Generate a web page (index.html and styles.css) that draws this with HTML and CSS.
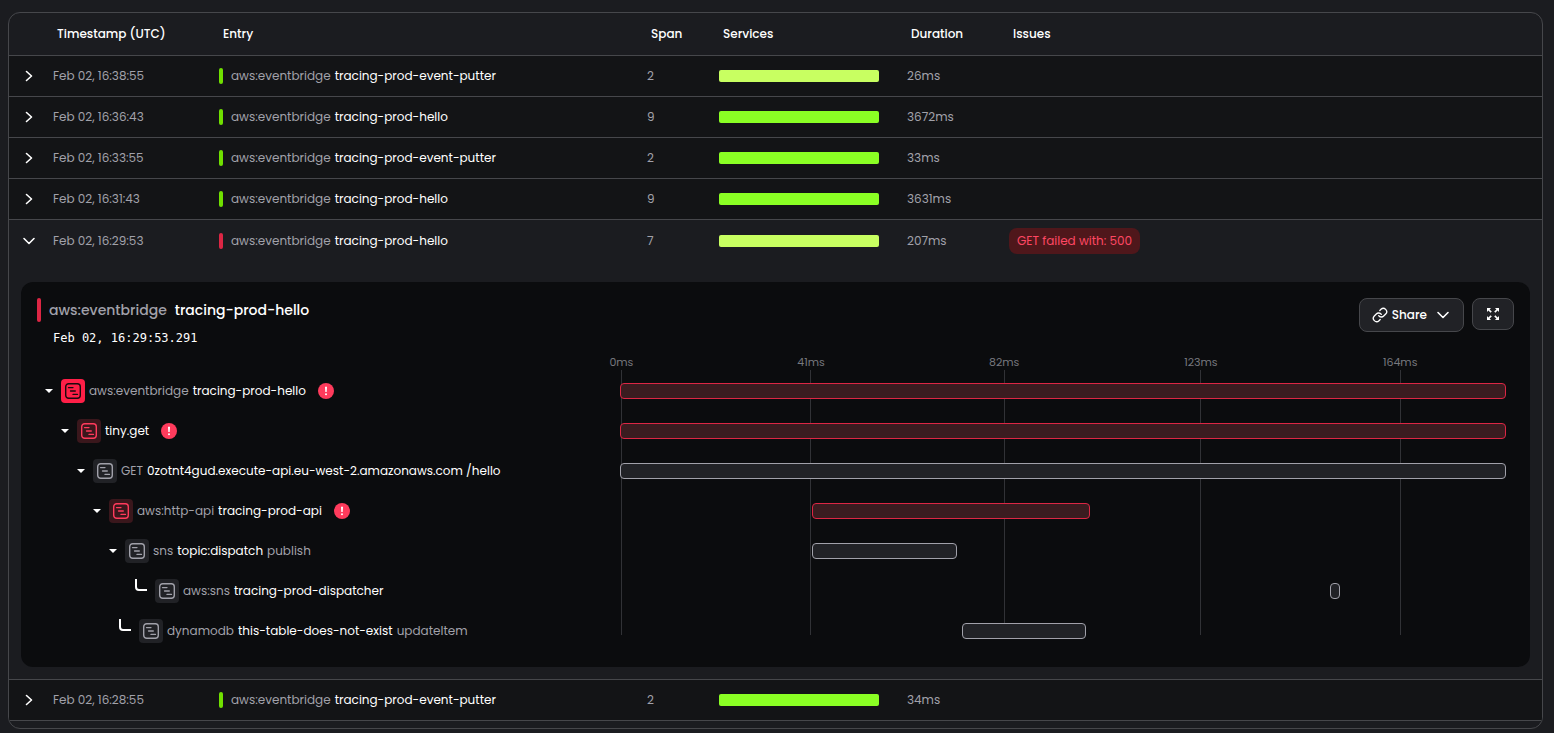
FILE: index.html
```html
<!DOCTYPE html>
<html lang="en">
<head>
<meta charset="utf-8">
<title>Traces</title>
<link rel="stylesheet" href="styles.css">
</head>
<body>
<svg class="defs" aria-hidden="true">
  <symbol id="right" viewBox="0 0 16 16"><path d="M5.5 3.500L10.500 8L5.500 12.500" fill="none" stroke="currentColor" stroke-width="1.600" stroke-linecap="round" stroke-linejoin="round"/></symbol>
  <symbol id="down" viewBox="0 0 16 16"><path d="M3 5.500L8 10.500L13 5.500" fill="none" stroke="currentColor" stroke-width="1.600" stroke-linecap="round" stroke-linejoin="round"/></symbol>
  <symbol id="caret" viewBox="0 0 8 8"><path d="M0 2H8L4 6Z" fill="currentColor"/></symbol>
  <symbol id="elbow" viewBox="0 0 12 12"><path d="M1 0V8Q1 11 4 11H12" fill="none" stroke="currentColor" stroke-width="2"/></symbol>
  <symbol id="span" viewBox="0 0 16 16"><rect x=".7" y=".7" width="14.600" height="14.600" rx="3" fill="none" stroke="currentColor" stroke-width="1.400"/><path d="M3.500 4.600H8M5.500 8H10.300M8 11.400H12.500" fill="none" stroke="currentColor" stroke-width="1.300" stroke-linecap="round"/></symbol>
  <symbol id="alert" viewBox="0 0 16 16"><circle cx="8" cy="8" r="8" fill="#ff3b5c"/><path d="M7 3.700H9L8.700 9H7.300Z" fill="#fff"/><circle cx="8" cy="11.200" r="1" fill="#fff"/></symbol>
  <symbol id="link" viewBox="0 0 24 24"><path d="M10 13a5 5 0 0 0 7.540.540l3-3a5 5 0 0 0-7.070-7.070l-1.720 1.710M14 11a5 5 0 0 0-7.540-.540l-3 3a5 5 0 0 0 7.070 7.070l1.710-1.710" fill="none" stroke="currentColor" stroke-width="2" stroke-linecap="round" stroke-linejoin="round"/></symbol>
  <symbol id="expand" viewBox="0 0 12 12"><path d="M0 0H4L2.600 1.400L4.800 3.600L3.600 4.800L1.400 2.600L0 4ZM12 0V4L10.600 2.600L8.400 4.800L7.200 3.600L9.400 1.400L8 0ZM0 12V8L1.400 9.400L3.600 7.200L4.800 8.400L2.600 10.600L4 12ZM12 12H8L9.400 10.600L7.200 8.400L8.400 7.200L10.600 9.400L12 8Z" fill="currentColor"/></symbol>
</svg>
<main class="traces">
  <table class="trace-table">
    <colgroup><col class="c-toggle"><col class="c-time"><col class="c-entry"><col class="c-span"><col class="c-services"><col class="c-duration"><col></colgroup>
    <thead>
      <tr><th></th><th>Timestamp (UTC)</th><th>Entry</th><th>Span</th><th>Services</th><th>Duration</th><th>Issues</th></tr>
    </thead>
    <tbody>
      <tr class="trace">
        <td><button class="toggle" aria-label="Expand trace"><svg><use href="#right"/></svg></button></td>
        <td>Feb 02, 16:38:55</td>
        <td><div class="entry"><i class="mark"></i><span class="name">aws:eventbridge <b>tracing-prod-event-putter</b></span></div></td>
        <td>2</td><td><div class="service light"></div></td><td>26ms</td><td></td>
      </tr>
      <tr class="trace">
        <td><button class="toggle" aria-label="Expand trace"><svg><use href="#right"/></svg></button></td>
        <td>Feb 02, 16:36:43</td>
        <td><div class="entry"><i class="mark"></i><span class="name">aws:eventbridge <b>tracing-prod-hello</b></span></div></td>
        <td>9</td><td><div class="service"></div></td><td>3672ms</td><td></td>
      </tr>
      <tr class="trace">
        <td><button class="toggle" aria-label="Expand trace"><svg><use href="#right"/></svg></button></td>
        <td>Feb 02, 16:33:55</td>
        <td><div class="entry"><i class="mark"></i><span class="name">aws:eventbridge <b>tracing-prod-event-putter</b></span></div></td>
        <td>2</td><td><div class="service"></div></td><td>33ms</td><td></td>
      </tr>
      <tr class="trace">
        <td><button class="toggle" aria-label="Expand trace"><svg><use href="#right"/></svg></button></td>
        <td>Feb 02, 16:31:43</td>
        <td><div class="entry"><i class="mark"></i><span class="name">aws:eventbridge <b>tracing-prod-hello</b></span></div></td>
        <td>9</td><td><div class="service"></div></td><td>3631ms</td><td></td>
      </tr>
      <tr class="trace open">
        <td><button class="toggle" aria-label="Collapse trace" aria-expanded="true"><svg><use href="#down"/></svg></button></td>
        <td>Feb 02, 16:29:53</td>
        <td><div class="entry"><i class="mark error"></i><span class="name">aws:eventbridge <b>tracing-prod-hello</b></span></div></td>
        <td>7</td><td><div class="service light"></div></td><td>207ms</td><td><span class="issue">GET failed with: 500</span></td>
      </tr>
      <tr class="detail">
        <td colspan="7">
          <section class="panel">
            <header class="panel-head">
              <div>
                <h2 class="title"><i class="mark error"></i><span>aws:eventbridge</span><b>tracing-prod-hello</b></h2>
                <time class="stamp">Feb 02, 16:29:53.291</time>
              </div>
              <div class="actions">
                <button class="btn share"><svg class="link"><use href="#link"/></svg>Share<svg class="chev"><use href="#down"/></svg></button>
                <button class="btn full" aria-label="Full screen"><svg><use href="#expand"/></svg></button>
              </div>
            </header>
            <div class="waterfall">
              <div class="axis">
                <div class="tick" style="left:0.1%"><span>0ms</span></div>
                <div class="tick" style="left:21.5%"><span>41ms</span></div>
                <div class="tick" style="left:43.3%"><span>82ms</span></div>
                <div class="tick" style="left:65.5%"><span>123ms</span></div>
                <div class="tick" style="left:88%"><span>164ms</span></div>
              </div>
              <div class="node d0"><svg class="caret"><use href="#caret"/></svg><i class="icon solid"><svg><use href="#span"/></svg></i><span class="name">aws:eventbridge <b>tracing-prod-hello</b></span><svg class="alert"><use href="#alert"/></svg></div>
              <div class="track"><div class="bar error" style="width:100%"></div></div>
              <div class="node d1"><svg class="caret"><use href="#caret"/></svg><i class="icon error"><svg><use href="#span"/></svg></i><span class="name"><b>tiny.get</b></span><svg class="alert"><use href="#alert"/></svg></div>
              <div class="track"><div class="bar error" style="width:100%"></div></div>
              <div class="node d2"><svg class="caret"><use href="#caret"/></svg><i class="icon"><svg><use href="#span"/></svg></i><span class="name">GET <b>0zotnt4gud.execute-api.eu-west-2.amazonaws.com /hello</b></span></div>
              <div class="track"><div class="bar" style="width:100%"></div></div>
              <div class="node d3"><svg class="caret"><use href="#caret"/></svg><i class="icon error"><svg><use href="#span"/></svg></i><span class="name">aws:http-api <b>tracing-prod-api</b></span><svg class="alert"><use href="#alert"/></svg></div>
              <div class="track"><div class="bar error" style="margin-left:21.7%;width:31.4%"></div></div>
              <div class="node d4"><svg class="caret"><use href="#caret"/></svg><i class="icon"><svg><use href="#span"/></svg></i><span class="name">sns <b>topic:dispatch</b> publish</span></div>
              <div class="track"><div class="bar" style="margin-left:21.7%;width:16.3%"></div></div>
              <div class="node leaf l5"><svg class="elbow"><use href="#elbow"/></svg><i class="icon"><svg><use href="#span"/></svg></i><span class="name">aws:sns <b>tracing-prod-dispatcher</b></span></div>
              <div class="track"><div class="bar" style="margin-left:80.1%;width:1.2%"></div></div>
              <div class="node leaf l4"><svg class="elbow"><use href="#elbow"/></svg><i class="icon"><svg><use href="#span"/></svg></i><span class="name">dynamodb <b>this-table-does-not-exist</b> updateItem</span></div>
              <div class="track"><div class="bar" style="margin-left:38.6%;width:14%"></div></div>
            </div>
          </section>
        </td>
      </tr>
      <tr class="trace">
        <td><button class="toggle" aria-label="Expand trace"><svg><use href="#right"/></svg></button></td>
        <td>Feb 02, 16:28:55</td>
        <td><div class="entry"><i class="mark"></i><span class="name">aws:eventbridge <b>tracing-prod-event-putter</b></span></div></td>
        <td>2</td><td><div class="service"></div></td><td>34ms</td><td></td>
      </tr>
    </tbody>
  </table>
</main>
</body>
</html>
```
FILE: styles.css
```css
* { box-sizing: border-box; }
body {
  margin: 0;
  padding: 12px 11px 4px 8px;
  background: #1b1c20;
  color: #a1a1aa;
  font: 12px/20px Poppins, Inter, sans-serif;
}
svg { display: block; flex: none; }
.defs { display: none; }
b { font-weight: 400; color: #fff; }
i { display: block; flex: none; }
button { font: inherit; color: #fff; cursor: pointer; }

.traces {
  border: 1px solid #46474b;
  border-radius: 12px;
  padding-bottom: 7px;
  overflow: hidden;
}
.trace-table { width: 100%; table-layout: fixed; border-collapse: separate; border-spacing: 0; }
.c-toggle { width: 36px; }
.c-time { width: 166px; }
.c-entry { width: 428px; }
.c-span { width: 72px; }
.c-services { width: 188px; }
.c-duration { width: 102px; }
th {
  height: 43px;
  padding: 0 12px;
  border-bottom: 1px solid #46474b;
  text-align: left;
  font-weight: 500;
  color: #fff;
}
td { padding: 0 8px; }
.trace td { height: 41px; background: #131416; border-bottom: 1px solid #46474b; white-space: nowrap; }
.trace.open td { height: 42px; background: #1b1c20; border-bottom: 0; }
.toggle { display: block; margin: 0 auto; padding: 0; border: 0; background: none; }
.trace td:first-child { padding: 0 4px 0 8px; }
.toggle svg { width: 16px; height: 16px; }
.entry { display: flex; align-items: center; gap: 8px; }
.name { display: flex; gap: 4px; }
.mark { width: 4px; height: 16px; border-radius: 2px; background: #70e000; }
.mark.error { background: #dc2644; }
.service { width: 160px; height: 12px; border-radius: 2px; background: #8aff24; }
.service.light { background: #c8ff61; }
.issue {
  display: inline-block;
  padding: 3px 8px;
  border-radius: 8px;
  background: #4f171b;
  color: #ff4763;
}

.detail td { padding: 20px 12px 12px; border-bottom: 1px solid #46474b; }
.panel { padding: 16px; border-radius: 12px; background: #0b0c0e; }
.panel-head { display: flex; justify-content: space-between; align-items: flex-start; min-height: 56px; }
.title { display: flex; align-items: center; gap: 8px; margin: 0; font-size: 14px; line-height: 24px; font-weight: 500; }
.title b { font-weight: 500; }
.title .mark { height: 24px; }
.stamp { display: block; padding: 6px 16px 0; color: #fff; font: 12px/20px "DejaVu Sans Mono", monospace; }
.actions { display: flex; align-items: flex-start; gap: 8px; }
.btn {
  display: flex;
  align-items: center;
  justify-content: center;
  border: 1px solid #46474b;
  border-radius: 8px;
  background: #212226;
  font-weight: 500;
}
.share { height: 34px; padding: 0 12px; gap: 4px; }
.share .link { width: 16px; height: 16px; }
.share .chev { width: 16px; height: 16px; margin-left: 4px; }
.full { width: 42px; height: 32px; padding: 0; }
.full svg { width: 12px; height: 12px; }

.waterfall {
  display: grid;
  grid-template-columns: 583px 1fr;
  grid-template-rows: 17px;
  grid-auto-rows: 40px;
  padding-right: 8px;
}
.axis { position: relative; grid-column: 2; grid-row: 1 / span 8; margin-bottom: 16px; }
.tick { position: absolute; top: 16px; bottom: 0; width: 1px; background: #313236; }
.tick span {
  position: absolute;
  bottom: 100%;
  left: 50%;
  transform: translateX(-50%);
  font-size: 11px;
  line-height: 16px;
  color: #77787e;
}
.node { grid-column: 1; display: flex; align-items: center; white-space: nowrap; }
.node:nth-of-type(2), .node:nth-of-type(2) + .track { grid-row: 2; }
.node:nth-of-type(4), .node:nth-of-type(4) + .track { grid-row: 3; }
.node:nth-of-type(6), .node:nth-of-type(6) + .track { grid-row: 4; }
.node:nth-of-type(8), .node:nth-of-type(8) + .track { grid-row: 5; }
.node:nth-of-type(10), .node:nth-of-type(10) + .track { grid-row: 6; }
.node:nth-of-type(12), .node:nth-of-type(12) + .track { grid-row: 7; }
.node:nth-of-type(14), .node:nth-of-type(14) + .track { grid-row: 8; }
.d0 { padding-left: 8px; }
.d1 { padding-left: 24px; }
.d2 { padding-left: 40px; }
.d3 { padding-left: 56px; }
.d4 { padding-left: 72px; }
.l5 { padding-left: 98px; }
.l4 { padding-left: 82px; }
.caret { width: 8px; height: 8px; margin-right: 8px; color: #fff; }
.elbow { width: 12px; height: 12px; margin: 0 8px 12px 0; color: #fff; }
.icon {
  display: flex;
  align-items: center;
  justify-content: center;
  width: 24px;
  height: 24px;
  margin-right: 4px;
  border-radius: 4px;
  background: #212226;
  color: #a1a1aa;
}
.icon svg { width: 16px; height: 16px; }
.icon.error { background: #3a171c; color: #ff3b5c; }
.icon.solid { background: #ff1f47; color: #1b0a0e; }
.alert { width: 16px; height: 16px; margin-left: 12px; }
.track { grid-column: 2; display: flex; align-items: center; position: relative; }
.bar { height: 16px; border: 1px solid #a1a1aa; border-radius: 4px; background: #212226; }
.bar.error { border-color: #dc2644; background: #3a1c20; }
```
